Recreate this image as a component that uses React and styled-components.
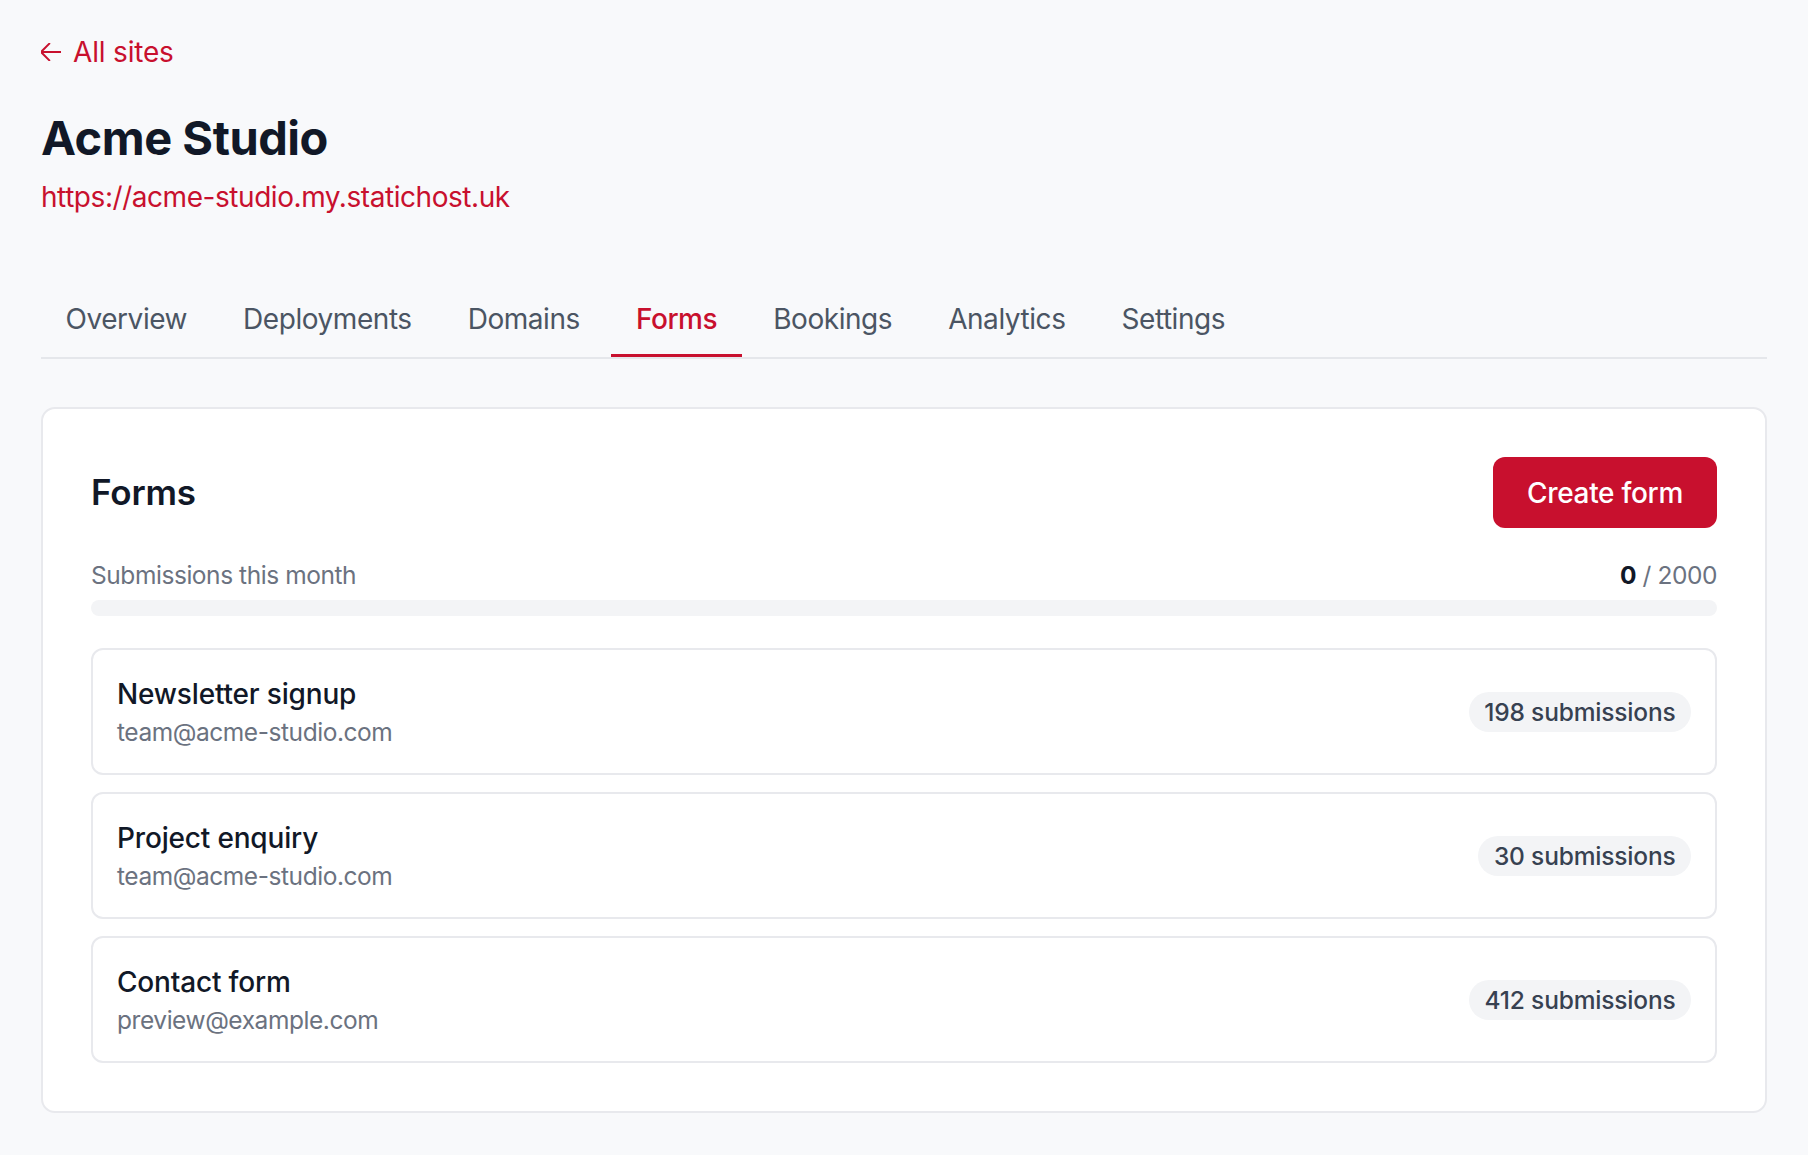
import React from 'react';
import styled, { createGlobalStyle } from 'styled-components';

const GlobalStyle = createGlobalStyle`
    html, body {
        margin: 0;
        padding: 0;
        background: #f8f9fb;
    }
    body {
        font-family: Inter, "Noto Sans", "Liberation Sans", sans-serif;
        color: #111827;
        letter-spacing: -0.011em;
        -webkit-font-smoothing: antialiased;
    }
    * { box-sizing: border-box; }
`;

const RED = '#c8102e';

const Page = styled.div`
    min-height: 100vh;
    padding: 31px 41px 42px;
`;

const BackLink = styled.a`
    display: inline-flex;
    align-items: center;
    gap: 12px;
    color: ${RED};
    font-size: 28px;
    line-height: 42px;
    text-decoration: none;
    cursor: pointer;
`;

const Title = styled.h1`
    margin: 37px 0 0;
    font-size: 47px;
    line-height: 56px;
    font-weight: 700;
    letter-spacing: -0.01em;
    color: #111827;
`;

const SiteUrl = styled.a`
    display: block;
    margin-top: 9.5px;
    color: ${RED};
    font-size: 28px;
    line-height: 42px;
    letter-spacing: -0.016em;
    text-decoration: none;
`;

const TabBar = styled.nav`
    display: flex;
    gap: 7px;
    margin-top: 66px;
    border-bottom: 2px solid #e5e7eb;
`;

const Tab = styled.a`
    padding: 14px 24.5px 14.5px;
    font-size: 28px;
    line-height: 42px;
    letter-spacing: -0.016em;
    color: ${p => (p.$active ? RED : '#4b5563')};
    font-weight: ${p => (p.$active ? 500 : 400)};
    border-bottom: 3.5px solid ${p => (p.$active ? RED : 'transparent')};
    cursor: pointer;
`;

const Card = styled.section`
    margin-top: 48px;
    background: #fff;
    border: 2px solid #e8e9ed;
    border-radius: 14px;
    padding: 48px;
`;

const CardHeader = styled.div`
    display: flex;
    align-items: center;
    justify-content: space-between;
`;

const CardTitle = styled.h2`
    margin: 0;
    font-size: 35px;
    line-height: 49px;
    font-weight: 600;
    color: #111827;
`;

const PrimaryButton = styled.button`
    height: 71px;
    padding: 0 34px;
    border: none;
    border-radius: 12px;
    background: ${RED};
    color: #fff;
    font-family: inherit;
    font-size: 28px;
    font-weight: 500;
    letter-spacing: -0.011em;
    cursor: pointer;
`;

const UsageRow = styled.div`
    display: flex;
    justify-content: space-between;
    margin-top: 30px;
    font-size: 24.5px;
    line-height: 35px;
    letter-spacing: -0.018em;
    color: #6b7280;
`;

const UsageCount = styled.span`
    strong {
        color: #111827;
        font-weight: 700;
    }
`;

const Track = styled.div`
    margin-top: 7px;
    height: 16px;
    border-radius: 999px;
    background: #f3f4f6;
    overflow: hidden;
`;

const Fill = styled.div`
    height: 100%;
    background: ${RED};
`;

const FormList = styled.div`
    display: flex;
    flex-direction: column;
    gap: 17px;
    margin-top: 32px;
`;

const FormRow = styled.div`
    display: flex;
    align-items: center;
    justify-content: space-between;
    padding: 23px 24px;
    border: 2px solid #e8e9ed;
    border-radius: 12px;
`;

const FormName = styled.div`
    font-size: 28px;
    line-height: 42px;
    font-weight: 500;
    color: #111827;
`;

const FormEmail = styled.div`
    font-size: 24.5px;
    line-height: 35px;
    letter-spacing: -0.018em;
    color: #6b7280;
`;

const Badge = styled.span`
    padding: 3px 15.5px;
    border-radius: 999px;
    background: #f3f4f6;
    color: #374151;
    font-size: 24.5px;
    line-height: 34px;
    font-weight: 500;
`;

const ArrowLeft = () => (
    <svg width="20" height="18" viewBox="3 4 18 16" fill="none" stroke="currentColor" strokeWidth="1.8" strokeLinecap="round" strokeLinejoin="round">
        <path d="M10.5 19.5L3 12m0 0l7.5-7.5M3 12h18" />
    </svg>
);

const tabs = ['Overview', 'Deployments', 'Domains', 'Forms', 'Bookings', 'Analytics', 'Settings'];

const forms = [
    { name: 'Newsletter signup', email: 'team@acme-studio.com', count: 198 },
    { name: 'Project enquiry', email: 'team@acme-studio.com', count: 30 },
    { name: 'Contact form', email: 'preview@example.com', count: 412 },
];

const used = 0;
const limit = 2000;

export default function App() {
    return (
        <Page>
            <GlobalStyle />
            <BackLink>
                <ArrowLeft />
                All sites
            </BackLink>

            <Title>Acme Studio</Title>
            <SiteUrl>https://acme-studio.my.statichost.uk</SiteUrl>

            <TabBar>
                {tabs.map(t => (
                    <Tab key={t} $active={t === 'Forms'}>{t}</Tab>
                ))}
            </TabBar>

            <Card>
                <CardHeader>
                    <CardTitle>Forms</CardTitle>
                    <PrimaryButton>Create form</PrimaryButton>
                </CardHeader>

                <UsageRow>
                    <span>Submissions this month</span>
                    <UsageCount><strong>{used}</strong> / {limit}</UsageCount>
                </UsageRow>
                <Track>
                    <Fill style={{ width: `${(used / limit) * 100}%` }} />
                </Track>

                <FormList>
                    {forms.map(f => (
                        <FormRow key={f.name}>
                            <div>
                                <FormName>{f.name}</FormName>
                                <FormEmail>{f.email}</FormEmail>
                            </div>
                            <Badge>{f.count} submissions</Badge>
                        </FormRow>
                    ))}
                </FormList>
            </Card>
        </Page>
    );
}
